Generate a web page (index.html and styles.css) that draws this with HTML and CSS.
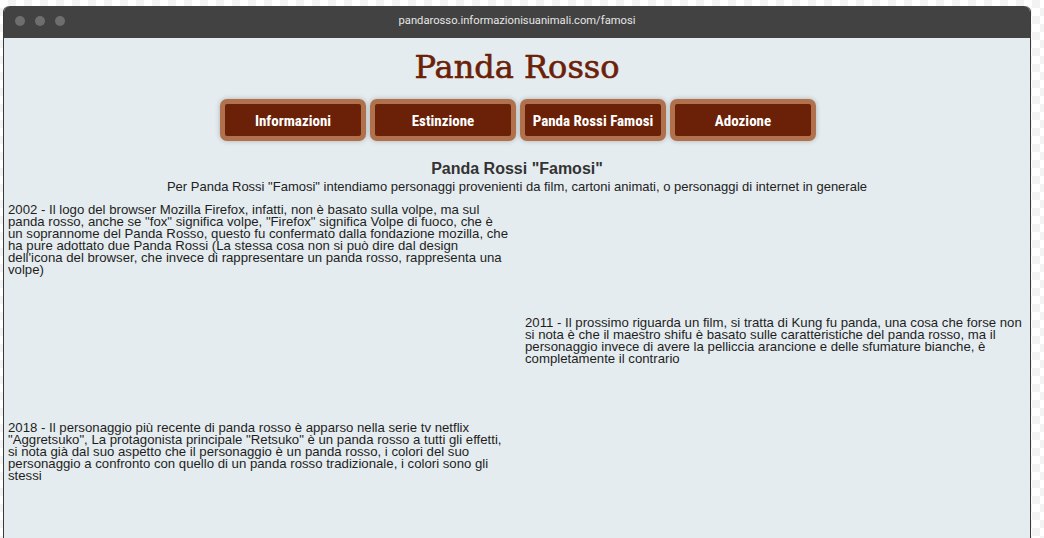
FILE: index.html
```html
<!DOCTYPE html>
<html lang="it">
<head>
<meta charset="utf-8">
<title>Panda Rosso - Famosi</title>
<link rel="stylesheet" href="styles.css">
</head>
<body>
<div class="window">
  <div class="titlebar">
    <div class="dots"><span class="dot"></span><span class="dot"></span><span class="dot"></span></div>
    <div class="url">pandarosso.informazionisuanimali.com/famosi</div>
  </div>
  <div class="page">
    <h1 class="brand">Panda Rosso</h1>
    <nav class="menu">
      <a class="btn">Informazioni</a>
      <a class="btn">Estinzione</a>
      <a class="btn">Panda Rossi Famosi</a>
      <a class="btn">Adozione</a>
    </nav>
    <h2 class="section-title">Panda Rossi "Famosi"</h2>
    <p class="intro">Per Panda Rossi "Famosi" intendiamo personaggi provenienti da film, cartoni animati, o personaggi di internet in generale</p>
    <div class="items">
      <div class="item item-left first">2002 - Il logo del browser Mozilla Firefox, infatti, non è basato sulla volpe, ma sul panda rosso, anche se "fox" significa volpe, "Firefox" significa Volpe di fuoco, che è un soprannome del Panda Rosso, questo fu confermato dalla fondazione mozilla, che ha pure adottato due Panda Rossi (La stessa cosa non si può dire dal design dell'icona del browser, che invece di rappresentare un panda rosso, rappresenta una volpe)</div>
      <div class="item item-right second">2011 - Il prossimo riguarda un film, si tratta di Kung fu panda, una cosa che forse non si nota è che il maestro shifu è basato sulle caratteristiche del panda rosso, ma il personaggio invece di avere la pelliccia arancione e delle sfumature bianche, è completamente il contrario</div>
      <div class="item item-left third">2018 - Il personaggio più recente di panda rosso è apparso nella serie tv netflix "Aggretsuko", La protagonista principale "Retsuko" è un panda rosso a tutti gli effetti, si nota già dal suo aspetto che il personaggio è un panda rosso, i colori del suo personaggio a confronto con quello di un panda rosso tradizionale, i colori sono gli stessi</div>
    </div>
  </div>
</div>
</body>
</html>
```

FILE: styles.css
```css
html, body {
  margin: 0;
  padding: 0;
  height: 100%;
}
body {
  background-color: #ffffff;
  background-image: repeating-conic-gradient(#f3f3f3 0 25%, #ffffff 0 50%);
  background-size: 16px 16px;
  overflow: hidden;
}
.window {
  margin: 6px 0 0 3px;
  width: 1026px;
  border-left: 1px solid #3a3a3a;
  border-right: 1px solid #3a3a3a;
  border-radius: 6px 6px 0 0;
  height: 540px;
  display: flex;
  flex-direction: column;
}
.titlebar {
  height: 32px;
  background: #424242;
  border-radius: 6px 6px 0 0;
  display: flex;
  align-items: center;
  position: relative;
  flex: none;
}
.dots {
  display: flex;
  gap: 10px;
  padding-left: 11px;
  margin-top: -3px;
}
.dot {
  width: 10px;
  height: 10px;
  border-radius: 50%;
  background: #6e6e6e;
}
.url {
  position: absolute;
  left: 0;
  right: 0;
  top: 8px;
  text-align: center;
  font-family: Roboto, "Liberation Sans", sans-serif;
  font-size: 11.2px;
  color: #e6e6e6;
}
.page {
  flex: 1;
  background: #e5ecef;
  font-family: "Liberation Sans", Arial, sans-serif;
  color: #222;
}
.brand {
  margin: 0;
  padding-top: 7px;
  text-align: center;
  font-family: "DejaVu Serif", "Liberation Serif", serif;
  font-weight: normal;
  font-size: 32px;
  line-height: 44px;
  color: #6b2108;
  -webkit-text-stroke: 0.6px #6b2108;
}
.menu {
  display: flex;
  justify-content: center;
  gap: 4px;
  margin-top: 10px;
  padding-left: 2px;
}
.btn {
  box-sizing: border-box;
  width: 146px;
  height: 42px;
  background: #6b2108;
  border: 5px solid #b0714c;
  border-radius: 7px;
  box-shadow: 0 0 5px rgba(0,0,0,0.25);
  color: #fff;
  font-family: "Liberation Sans Narrow", "Roboto Condensed", Roboto, sans-serif;
  font-weight: bold;
  font-size: 15px;
  display: flex;
  align-items: center;
  justify-content: center;
  padding-top: 2px;
  text-decoration: none;
}
.section-title {
  margin: 18px 0 0;
  text-align: center;
  font-size: 16px;
  line-height: 20px;
  font-weight: bold;
  color: #333;
}
.intro {
  margin: 0;
  text-align: center;
  font-size: 13px;
  line-height: 16px;
  color: #222;
}
.items {
  display: flex;
  flex-direction: column;
  align-items: flex-start;
  padding: 0 0 0 4px;
  margin-top: 9px;
}
.item {
  font-size: 13.2px;
  line-height: 12px;
  color: #1e1e1e;
}
.first { width: 502px; }
.third { width: 503px; margin-top: 57px; }
.second { width: 505px; margin-left: 517px; margin-top: 41px; }
```
